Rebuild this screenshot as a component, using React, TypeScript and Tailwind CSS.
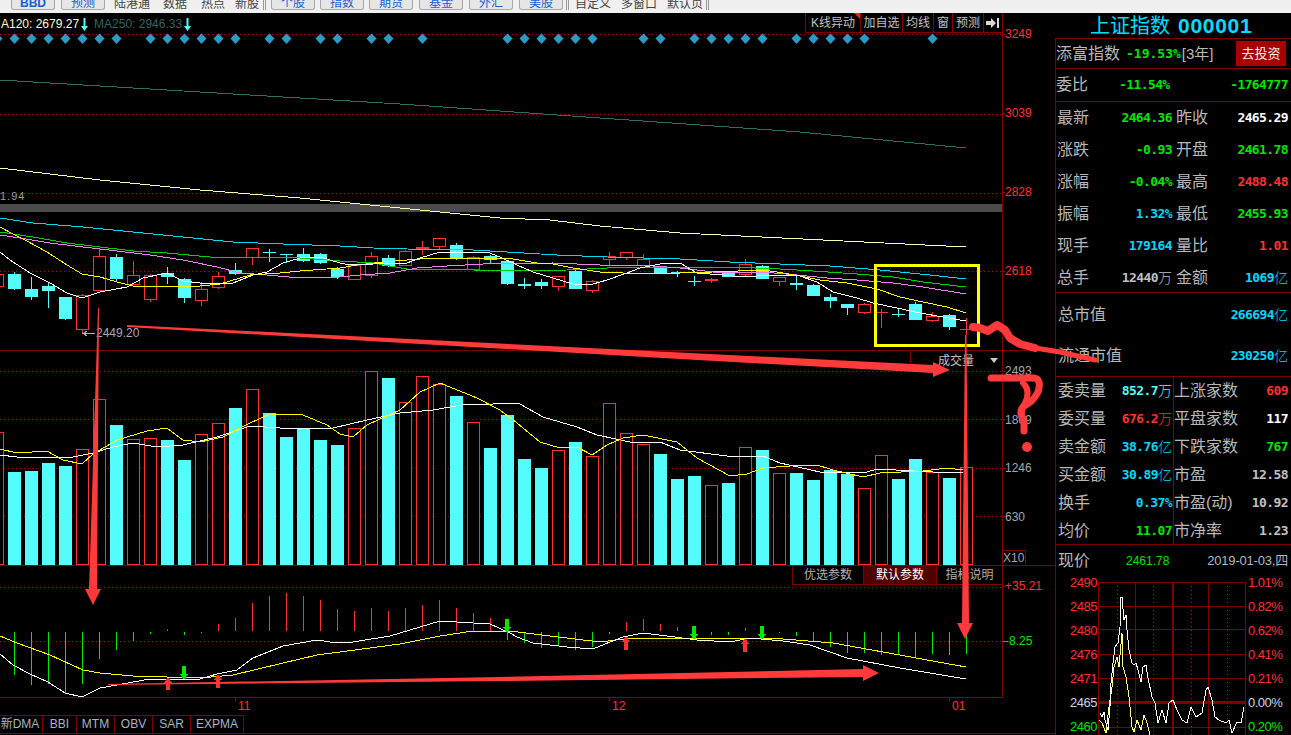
const RED = '#ff3232'
const CYAN = '#54fcfc'
const GREEN = '#00e600'

// [colour, wick top, body top, body bottom, wick bottom]
const candles: [string, number, number, number, number][] = [
  ['r', 274, 274, 286, 286], ['c', 272, 274, 289, 290], ['c', 277, 289, 297, 300], ['c', 283, 286, 291, 308],
  ['c', 297, 297, 319, 320], ['r', 294, 295, 329, 334], ['r', 249, 256, 290, 290], ['c', 254, 257, 279, 282],
  ['r', 261, 275, 284, 284], ['r', 274, 275, 299, 302], ['c', 267, 273, 277, 284], ['c', 278, 279, 298, 303],
  ['r', 282, 289, 300, 306], ['r', 272, 276, 287, 289], ['c', 263, 270, 274, 275], ['r', 248, 248, 257, 265],
  ['c', 249, 252, 253, 262], ['c', 254, 254, 255, 263], ['c', 248, 254, 261, 262], ['c', 253, 254, 263, 264],
  ['c', 267, 269, 277, 279], ['r', 264, 265, 279, 280], ['r', 252, 256, 275, 278], ['c', 255, 258, 266, 267],
  ['r', 250, 251, 265, 266], ['r', 241, 247, 249, 255], ['r', 238, 238, 246, 249], ['c', 243, 245, 259, 260],
  ['r', 256, 257, 269, 270], ['c', 255, 256, 260, 263], ['c', 261, 261, 284, 285], ['c', 278, 284, 286, 289],
  ['c', 279, 282, 286, 289], ['r', 276, 276, 286, 291], ['c', 270, 271, 289, 289], ['r', 280, 281, 290, 293],
  ['r', 252, 256, 259, 266], ['r', 252, 252, 257, 260], ['r', 254, 259, 265, 265], ['c', 266, 267, 274, 274],
  ['c', 271, 272, 273, 277], ['c', 276, 281, 282, 286], ['r', 278, 279, 281, 283], ['c', 272, 273, 277, 277],
  ['r', 259, 264, 274, 277], ['c', 265, 266, 279, 279], ['r', 277, 277, 281, 286], ['c', 276, 283, 285, 290],
  ['c', 284, 285, 296, 296], ['c', 294, 297, 301, 308], ['c', 304, 304, 308, 315], ['r', 303, 304, 312, 314],
  ['r', 309, 312, 313, 328], ['c', 308, 314, 315, 317], ['c', 302, 304, 320, 320], ['r', 312, 316, 320, 322],
  ['c', 314, 315, 327, 330], ['r', 318, 329, 330, 335],
]

const volumeTops = [
  432, 472, 471, 463, 466, 449, 399, 425, 439, 438, 440, 460, 434, 423, 408, 389, 413, 437, 429, 440, 445, 428, 371, 378, 402, 376, 384, 396, 422,
  448, 415, 459, 468, 450, 442, 456, 403, 433, 444, 454, 479, 476, 485, 483, 447, 450, 473, 473, 480, 470, 474, 488, 455, 479, 459, 472, 478, 467,
]

// zoomed y of each MACD bar end: under 198 is a red bar, over it a green one
const macdEnds = [
  0, 331, 359, 356, 383, 356, 281, 254, 228, 207, 192, 210, 204, 177, 159, 114, 94, 84, 93, 105, 132, 138, 129, 138, 129, 120, 105, 129, 144,
  159, 225, 234, 249, 243, 255, 246, 207, 171, 162, 177, 186, 220, 210, 210, 189, 220, 203, 213, 231, 246, 264, 264, 270, 271, 276, 267, 270, 267,
]

const signalIndexes = [0, 1, 2, 3, 4, 5, 6, 7, 9, 10, 11, 12, 13, 14, 16, 17, 19, 20, 22, 23, 25, 30, 31, 32, 33, 34, 35, 38, 39, 41, 42, 43, 44, 45, 47, 48, 49, 50, 51, 55]

const priceLines = [
  { color: '#2c6e66', points: '0,80 200,92 400,104 600,118 800,132 966,148' },
  { color: '#ffffb0', points: '0,168 100,180 200,190 300,198 400,208 500,218 550,220 600,226 680,233 823,240 966,247' },
  { color: '#00d8f0', points: '0,218 33,223 83,227 133,232 183,237 233,242 283,244 340,246 373,248 407,249 473,250 507,252 557,255 607,257 680,259 730,262 780,264 830,266 880,270 930,275 966,279' },
  { color: '#00d000', points: '0,232 33,237 67,243 100,247 133,251 167,253 210,257 267,257 300,258 340,261 373,263 407,269 447,269 500,271 567,270 607,268 640,267 680,267 730,267 780,269 813,271 857,274 893,277 923,282 966,287' },
  { color: '#f080f0', points: '0,235 20,238 50,243 83,247 117,251 150,255 183,260 217,267 240,273 267,275 300,278 340,277 360,275 390,273 417,268 447,266 483,264 553,263 600,265 640,265 680,268 713,272 763,272 797,275 827,278 857,280 893,283 923,287 966,294' },
  { color: '#ffff00', points: '0,227 13,234 27,241 47,252 67,265 82,274 100,277 117,282 133,286 167,286 200,286 220,284 250,275 280,273 300,271 340,268 357,265 383,262 407,260 433,258 483,258 513,259 537,263 553,264 573,268 600,272 623,273 650,273 680,273 713,272 763,270 777,272 800,276 820,280 847,283 877,289 900,297 923,302 947,307 966,313' },
  { color: '#ffffff', points: '0,252 10,260 30,273 50,283 67,293 82,298 100,292 127,287 143,278 167,273 183,281 200,283 233,283 253,275 267,272 283,263 300,258 320,257 340,263 350,265 373,264 407,263 420,258 440,252 460,252 487,252 500,257 517,265 533,272 553,278 573,284 593,284 607,280 627,273 640,268 660,264 680,263 697,273 723,275 740,277 757,276 780,275 797,275 817,282 833,292 857,298 873,303 897,308 920,313 943,317 966,321' },
]

const volumeLines = [
  { color: '#ffffff', points: '0,455 17,457 40,457 73,457 93,453 113,447 133,443 157,447 183,445 217,437 250,426 280,428 333,428 367,420 400,413 433,410 467,404 487,405 500,403 520,404 543,417 577,427 597,435 630,442 660,442 680,450 727,456 763,456 780,463 820,472 867,472 877,469 933,472 963,472' },
  { color: '#ffff00', points: '0,449 17,453 47,451 63,460 82,464 93,454 117,440 147,431 167,428 183,440 200,442 223,437 250,423 270,414 303,415 327,425 340,434 353,437 367,425 400,410 420,392 440,383 477,398 500,410 517,423 540,442 560,448 577,447 592,455 607,445 623,438 643,435 677,442 697,458 730,476 747,474 763,468 790,466 817,465 833,470 863,477 880,473 923,471 947,468 963,470' },
]

const macdLines = [
  { color: '#ffff00', points: '0,636 17,643 50,655 83,670 100,673 133,676 200,678 233,675 283,663 317,655 400,644 440,636 473,631 510,631 550,636 600,642 633,638 700,638 783,639 833,643 883,652 966,667' },
  { color: '#ffffff', points: '0,654 13,665 30,674 48,682 65,693 82,697 100,688 117,685 150,679 200,679 217,674 237,670 253,658 283,646 317,640 337,643 353,642 390,636 440,621 490,624 510,633 517,637 533,643 567,647 593,649 610,642 623,637 643,633 667,636 697,640 730,642 750,638 783,641 810,645 847,658 900,668 966,679' },
]

const sideRows = [
  { a: '最新', v: '2464.36', vc: 'text-[#00e600]', b: '昨收', w: '2465.29', wc: 'text-white' },
  { a: '涨跌', v: '-0.93', vc: 'text-[#00e600]', b: '开盘', w: '2461.78', wc: 'text-[#00e600]' },
  { a: '涨幅', v: '-0.04%', vc: 'text-[#00e600]', b: '最高', w: '2488.48', wc: 'text-[#ff3232]' },
  { a: '振幅', v: '1.32%', vc: 'text-[#00d8ff]', b: '最低', w: '2455.93', wc: 'text-[#00e600]' },
  { a: '现手', v: '179164', vc: 'text-[#00d8ff]', b: '量比', w: '1.01', wc: 'text-[#ff3232]' },
  { a: '总手', v: '12440', unit: '万', vc: 'text-[#c0c0c0]', b: '金额', w: '1069', wUnit: '亿', wc: 'text-[#00d8ff]' },
]

const tradeRows = [
  { a: '委卖量', v: '852.7', unit: '万', vc: 'text-[#54fcfc]', b: '上涨家数', w: '609', wc: 'text-[#ff3232]' },
  { a: '委买量', v: '676.2', unit: '万', vc: 'text-[#ff3232]', b: '平盘家数', w: '117', wc: 'text-white' },
  { a: '卖金额', v: '38.76', unit: '亿', vc: 'text-[#00d8ff]', b: '下跌家数', w: '767', wc: 'text-[#00e600]' },
  { a: '买金额', v: '30.89', unit: '亿', vc: 'text-[#00d8ff]', b: '市盈', w: '12.58', wc: 'text-[#c0c0c0]' },
  { a: '换手', v: '0.37%', vc: 'text-[#00d8ff]', b: '市盈(动)', w: '10.92', wc: 'text-[#c0c0c0]' },
  { a: '均价', v: '11.07', vc: 'text-[#00e600]', b: '市净率', w: '1.23', wc: 'text-[#c0c0c0]' },
]

const num = "[font-family:'DejaVu_Sans_Mono',monospace] font-bold text-[13px] tracking-[-0.6px]"
const label = 'text-[16px] text-[#b8b8b8] leading-none whitespace-nowrap'

const Dotted = ({ ys }: { ys: number[] }) => (
  <>
    {ys.map((y) => (
      <line key={y} x1="0" x2="1002" y1={y + 0.5} y2={y + 0.5} stroke="#a00000" strokeDasharray="1 3" />
    ))}
  </>
)

const Lines = ({ lines }: { lines: { color: string; points: string }[] }) => (
  <>
    {lines.map((l) => (
      <polyline key={l.color} points={l.points} fill="none" stroke={l.color} />
    ))}
  </>
)

// small buy and sell arrows on the MACD pane
const signal = (cx: number, top: number, bot: number, up: boolean) =>
  up
    ? `${cx},${top} ${cx + 4},${top + 6} ${cx + 2},${top + 6} ${cx + 2},${bot} ${cx - 2},${bot} ${cx - 2},${top + 6} ${cx - 4},${top + 6}`
    : `${cx},${bot} ${cx + 4},${bot - 6} ${cx + 2},${bot - 6} ${cx + 2},${top} ${cx - 2},${top} ${cx - 2},${bot - 6} ${cx - 4},${bot - 6}`

const Tick = ({ color = 'bg-[#a00000]' }: { color?: string }) => <div className={`w-[2px] h-px ${color} shrink-0`} />

const DownArrow = () => (
  <svg width="7" height="13" viewBox="0 0 7 13" className="ml-[2px] shrink-0">
    <path d="M2.5 0h2v8H7l-3.5 5L0 8h2.5z" fill="#54fcfc" />
  </svg>
)

const Toolbar = () => {
  const btn = 'w-[44px] h-[10px] flex items-end justify-center bg-[#e6e6e6] border-x border-b border-[#a8a8a8] rounded-b-[3px] text-[12px] leading-[12px] text-[#1560d4]'
  const plain = 'h-[10px] flex items-end text-[12px] leading-[12px] text-[#444] whitespace-nowrap'
  const sep = 'w-[3px] h-[10px] border-x border-[#999]'
  return (
    <div className="h-[13px] bg-[#f0f0f0] flex items-start pl-[11px] overflow-hidden">
      <div className={`${btn} font-bold`}>BBD</div>
      <div className={`${btn} ml-[6px]`}>预测</div>
      <div className={`${plain} ml-[9px]`}>陆港通</div>
      <div className={`${plain} ml-[13px]`}>数据</div>
      <div className={`${plain} ml-[14px]`}>热点</div>
      <div className={`${plain} ml-[10px]`}>新股</div>
      <div className={`${sep} ml-[4px]`} />
      <div className={`${btn} ml-[5px]`}>个股</div>
      <div className={`${btn} ml-[5px]`}>指数</div>
      <div className={`${btn} ml-[5px]`}>期货</div>
      <div className={`${btn} ml-[6px]`}>基金</div>
      <div className={`${btn} ml-[6px]`}>外汇</div>
      <div className={`${btn} ml-[6px]`}>美股</div>
      <div className={`${sep} ml-[3px]`} />
      <div className={`${plain} ml-[6px]`}>自定义</div>
      <div className={`${plain} ml-[10px]`}>多窗口</div>
      <div className={`${plain} ml-[10px]`}>默认页</div>
      <div className={`${sep} ml-[3px]`} />
    </div>
  )
}

const PricePane = () => (
  <div className="h-[338px] flex border-b border-[#800000]">
    <div className="w-[1003px] relative border-r border-[#800000]">
      <svg viewBox="0 13 1002 337" className="block w-[1002px] h-[337px]" shapeRendering="crispEdges">
        <Dotted ys={[34, 114, 193, 271]} />
        <rect x="0" y="204" width="1002" height="8" fill="#4a4a4a" />
        {signalIndexes.map((i) => {
          const cx = 17 * i - 2.5
          return <polygon key={i} points={`${cx},33.5 ${cx + 5},38.5 ${cx},44 ${cx - 5},38.5`} fill="#2e9ac4" shapeRendering="auto" />
        })}
        {candles.map(([kind, wt, bt, bb, wb], i) => {
          const left = 17 * i - 9
          const color = kind === 'r' ? RED : CYAN
          const thin = bb - bt <= 2
          return (
            <g key={i}>
              <line x1={left + 6.5} x2={left + 6.5} y1={wt} y2={wb} stroke={color} />
              {kind === 'c' || thin ? (
                <rect x={left} y={bt} width="13" height={Math.max(bb - bt, 1)} fill={color} />
              ) : (
                <rect x={left + 0.5} y={bt + 0.5} width="12" height={bb - bt} fill="#000" stroke={color} />
              )}
            </g>
          )
        })}
        <Lines lines={priceLines} />
        <line x1="83" x2="95" y1="333.5" y2="333.5" stroke="#b0b0b0" />
        <polyline points="87,331 83,333.5 87,336" fill="none" stroke="#b0b0b0" />
      </svg>
      <div className="absolute left-[1px] top-[3px] h-[16px] flex items-center text-[12px] whitespace-nowrap">
        <span className="text-[#ffffc8]">A120: 2679.27</span>
        <DownArrow />
        <span className="ml-[6px] text-[#33655f]">MA250: 2946.33</span>
        <DownArrow />
      </div>
      <div className="absolute left-0 top-[178px] text-[11px] leading-none tracking-[1px] text-[#a0a0a0]">1.94</div>
      <div className="absolute left-[96px] top-[313px] text-[12px] leading-[14px] text-[#a8a8b8]">2449.20</div>
      <div className="absolute right-0 top-0 h-[20px] flex border-l border-b border-[#800000] text-[12px] leading-[20px] text-[#c0c0c0] whitespace-nowrap bg-black">
        <div className="relative w-[55px] text-center border-r border-[#800000]">
          K线异动
          <div className="absolute right-0 top-0 border-t-[6px] border-l-[6px] border-t-[#ff1e1e] border-l-transparent" />
        </div>
        <div className="w-[42px] text-center border-r border-[#800000]">加自选</div>
        <div className="w-[31px] text-center border-r border-[#800000]">均线</div>
        <div className="w-[19px] text-center border-r border-[#800000]">窗</div>
        <div className="w-[31px] text-center border-r border-[#800000]">预测</div>
        <div className="w-[18px] flex items-center justify-center">
          <svg width="14" height="12" viewBox="0 0 14 12">
            <path d="M0 4h5V1l5 5-5 5V8H0z M11 1h2v10h-2z" fill="#d8d8d8" />
          </svg>
        </div>
      </div>
    </div>
    <div className="flex-1 flex flex-col pt-[13px] gap-[63px] text-[12px] leading-[16px] text-[#ff3232]">
      {['3249', '3039', '2828', '2618'].map((t) => (
        <div key={t} className="flex items-center h-[16px]">
          <Tick />
          {t}
        </div>
      ))}
    </div>
  </div>
)

const VolumePane = () => (
  <div className="h-[215px] flex border-b border-[#800000]">
    <div className="w-[1003px] relative border-r border-[#800000]">
      <svg viewBox="0 351 1002 214" className="block w-[1002px] h-[214px]" shapeRendering="crispEdges">
        <Dotted ys={[371, 419, 468, 516]} />
        {volumeTops.map((top, i) => {
          const left = 17 * i - 9
          return candles[i][0] === 'c' ? (
            <rect key={i} x={left} y={top} width="13" height={565 - top} fill={CYAN} />
          ) : (
            <rect key={i} x={left + 0.5} y={top + 0.5} width="12" height={564 - top} fill="#000" stroke={RED} />
          )
        })}
        <Lines lines={volumeLines} />
      </svg>
      <div className="absolute top-0 right-0 w-[92px] h-[12px] border-l border-[#800000] flex items-start text-[12px] leading-[20px] text-[#c0c0c0]">
        <span className="ml-[27px]">成交量</span>
        <div className="ml-[16px] mt-[7px] border-t-[5px] border-x-[4px] border-t-[#c8c8c8] border-x-transparent" />
      </div>
    </div>
    <div className="flex-1 flex flex-col pt-[12px] gap-[32.5px] text-[12px] leading-[16px] text-[#a0a8b0]">
      {['2493', '1869', '1246', '630'].map((t) => (
        <div key={t} className="flex items-center h-[16px]">
          <Tick />
          {t}
        </div>
      ))}
      <div className="-mt-[7px] w-[23px] h-[15px] border border-l-0 border-b-0 border-[#800000] text-[12px] leading-[15px]">X10</div>
    </div>
  </div>
)

const MacdPane = () => (
  <div className="h-[132px] flex">
    <div className="w-[1003px] relative border-r border-b border-[#800000]">
      <svg viewBox="0 566 1002 131" className="block w-[1002px] h-[131px]" shapeRendering="crispEdges">
        <Dotted ys={[587, 641]} />
        {macdEnds.map((end, i) => {
          if (!end) return null
          const x = 17 * i - 2.5
          return end < 198 ? (
            <line key={i} x1={x} x2={x} y1={565 + end / 3} y2="631" stroke={RED} />
          ) : (
            <line key={i} x1={x} x2={x} y1="632" y2={565 + end / 3} stroke={GREEN} />
          )
        })}
        <Lines lines={macdLines} />
        <polygon points={signal(184, 666, 680, false)} fill={GREEN} />
        <polygon points={signal(507, 619, 633, false)} fill={GREEN} />
        <polygon points={signal(694, 626, 640, false)} fill={GREEN} />
        <polygon points={signal(762, 626, 640, false)} fill={GREEN} />
        <polygon points={signal(168, 677, 690, true)} fill={RED} />
        <polygon points={signal(218, 674, 688, true)} fill={RED} />
        <polygon points={signal(626, 636, 650, true)} fill={RED} />
        <polygon points={signal(745, 638, 652, true)} fill={RED} />
      </svg>
      <div className="absolute top-0 right-0 h-[19px] flex border-l border-b border-[#800000] text-[12px] leading-[18px] text-[#b0b0b0]">
        <div className="w-[71px] text-center border-r border-[#800000]">优选参数</div>
        <div className="w-[73px] text-center border-r border-[#800000] bg-[#500000] text-white">默认参数</div>
        <div className="w-[65px] text-center">指标说明</div>
      </div>
    </div>
    <div className="flex-1 flex flex-col pt-[12px] gap-[39px] text-[12px] leading-[16px]">
      <div className="flex items-center h-[16px] text-[#ff3232]">
        <Tick />
        +35.21
      </div>
      <div className="flex items-center h-[16px] text-[#00e600]">
        <Tick color="bg-[#00e600]" />
        -8.25
      </div>
    </div>
  </div>
)

const DateAxis = () => (
  <div className="h-[17px] flex pl-[235px] text-[12px] leading-[17px] text-[#ff3232]">
    {[
      { t: '11', w: 'w-[374px]' },
      { t: '12', w: 'w-[340px]' },
      { t: '01', w: 'w-[30px]' },
    ].map((d) => (
      <div key={d.t} className={`${d.w} flex`}>
        <div className="w-px h-[3px] bg-[#a00000]" />
        <span className="ml-[2px]">{d.t}</span>
      </div>
    ))}
  </div>
)

const Tabs = () => (
  <div className="h-[19px] border-b border-[#800000] flex text-[12px] leading-[17px] text-[#a8b4c0]">
    <div className="flex border-t border-[#800000] -ml-[2px]">
      <div className="w-[45px] text-center border-r border-[#800000]">新DMA</div>
      <div className="w-[34px] text-center border-r border-[#800000]">BBI</div>
      <div className="w-[38px] text-center border-r border-[#800000]">MTM</div>
      <div className="w-[38px] text-center border-r border-[#800000]">OBV</div>
      <div className="w-[38px] text-center border-r border-[#800000]">SAR</div>
      <div className="w-[53px] text-center border-r border-[#800000]">EXPMA</div>
    </div>
  </div>
)

const Value = ({ v, unit, color }: { v: string; unit?: string; color: string }) => (
  <div className={`ml-auto flex items-center ${color} whitespace-nowrap`}>
    <span className={num}>{v}</span>
    {unit && <span className="text-[14px] leading-none font-light">{unit}</span>}
  </div>
)

const SidePanel = () => (
  <div className="flex-1 flex flex-col">
    <div className="h-[25px] flex items-center pl-[35px] text-[#00dcff] whitespace-nowrap">
      <span className="text-[20px] leading-none">上证指数</span>
      <span className="ml-[8px] text-[21px] leading-none font-bold tracking-[0.7px]">000001</span>
    </div>
    <div className="flex-1 flex flex-col border-l border-t border-[#800000] min-h-0">
      <div className="h-[30px] flex items-center border-b border-[#800000] pr-[5px]">
        <span className={label}>添富指数</span>
        <span className="ml-[6px] [font-family:'DejaVu_Sans_Mono',monospace] font-bold text-[13px] tracking-[0px] text-[#00e600]">-19.53%</span>
        <span className="ml-[1px] text-[15px] text-[#b8b8b8] leading-none whitespace-nowrap">[3年]</span>
        <div className="ml-auto w-[50px] h-[25px] flex items-center justify-center bg-[#a80000] text-[#f0f0f0] text-[13px] leading-none">去投资</div>
      </div>
      <div className="h-[33px] flex items-center border-b border-[#800000] pr-[3px]">
        <span className={`${label} w-[63px]`}>委比</span>
        <span className={`${num} text-[#00e600]`}>-11.54%</span>
        <span className={`${num} ml-auto text-[#00e600]`}>-1764777</span>
      </div>
      <div className="h-[191px] flex flex-col border-b border-[#800000] pl-[1px] pr-[3px]">
        {sideRows.map((r) => (
          <div key={r.a} className="h-[32px] shrink-0 flex items-center">
            <div className="w-[115px] flex items-center shrink-0">
              <span className={label}>{r.a}</span>
              <Value v={r.v} unit={r.unit} color={r.vc} />
            </div>
            <span className={`${label} ml-[4px]`}>{r.b}</span>
            <Value v={r.w} unit={r.wUnit} color={r.wc} />
          </div>
        ))}
      </div>
      <div className="h-[84px] flex flex-col border-b border-[#800000] pl-[2px] pr-[3px]">
        <div className="h-[41px] mt-[1px] flex items-center">
          <span className={label}>总市值</span>
          <Value v="266694" unit="亿" color="text-[#00d8ff]" />
        </div>
        <div className="h-[41px] flex items-center">
          <span className={label}>流通市值</span>
          <Value v="230250" unit="亿" color="text-[#00d8ff]" />
        </div>
      </div>
      <div className="h-[168px] grid grid-cols-[118px_1fr] border-b border-[#800000]">
        <div className="flex flex-col border-r border-[#800000] pl-[2px] pr-[1px]">
          {tradeRows.map((r) => (
            <div key={r.a} className="h-[28px] flex items-center">
              <span className={label}>{r.a}</span>
              <Value v={r.v} unit={r.unit} color={r.vc} />
            </div>
          ))}
        </div>
        <div className="flex flex-col pr-[3px]">
          {tradeRows.map((r) => (
            <div key={r.b} className="h-[28px] flex items-center">
              <span className={label}>{r.b}</span>
              <Value v={r.w} color={r.wc} />
            </div>
          ))}
        </div>
      </div>
      <div className="h-[32px] shrink-0 flex items-center pl-[2px] pr-[3px] text-[12px]">
        <span className={label}>现价</span>
        <span className="ml-[36px] text-[#00e600]">2461.78</span>
        <span className="ml-auto text-[13px] tracking-[-0.2px] text-[#b0b8c8] whitespace-nowrap">2019-01-03,四</span>
      </div>
      <div className="flex-1 flex overflow-hidden text-[13px] leading-[16px] tracking-[-0.5px]">
        <div className="w-[42px] flex flex-col items-end gap-[8px] -mt-[2px] shrink-0 pr-[1px] text-[#ff3232]">
          {['2490', '2485', '2480', '2476', '2471'].map((t) => (
            <div key={t}>{t}</div>
          ))}
          <div className="text-[#c8d4e0]">2465</div>
          <div className="text-[#00e600]">2460</div>
        </div>
        <svg viewBox="1099 582 148 153" className="block mt-[5px] w-[148px] h-[153px] shrink-0">
          <g shapeRendering="crispEdges" stroke="#800000" fill="none">
            {[582, 606, 629, 654, 678, 727].map((y) => (
              <line key={y} x1="1099" x2="1246" y1={y + 0.5} y2={y + 0.5} />
            ))}
            {[1099, 1136, 1209, 1246].map((x) => (
              <line key={x} x1={x + 0.5} x2={x + 0.5} y1="582" y2="735" />
            ))}
            {[1118, 1154, 1192, 1228].map((x) => (
              <line key={x} x1={x + 0.5} x2={x + 0.5} y1="582" y2="735" strokeDasharray="1 3" stroke="#c00000" />
            ))}
            <line x1="1174" x2="1174" y1="582" y2="735" strokeWidth="2" />
            <line x1="1099" x2="1246" y1="702" y2="702" strokeWidth="3" />
          </g>
          <g fill="none" shapeRendering="crispEdges">
            <polyline stroke="#ffff80" points="1100,720 1103,723 1107,733 1110,707 1113,687 1115,667 1118,657 1120,667 1123,633 1124,667 1127,677 1130,697 1133,727 1135,732 1138,720 1142,730 1145,715 1148,723 1151,735" />
            <polyline stroke="#ffffff" points="1101,713 1103,717 1105,712 1106,720 1109,730 1111,707 1112,683 1114,663 1116,647 1119,643 1121,627 1122,597 1123,597 1125,620 1127,615 1128,630 1130,650 1133,663 1135,665 1137,663 1139,670 1142,682 1144,667 1147,665 1149,678 1153,697 1156,703 1159,723 1163,710 1167,723 1170,703 1174,700 1178,710 1183,720 1188,723 1192,707 1197,717 1203,713 1207,690 1209,687 1213,700 1216,717 1220,720 1227,723 1230,720 1233,733 1238,722 1242,723 1245,707" />
          </g>
        </svg>
        <div className="flex flex-col gap-[8px] -mt-[2px] pl-[2px] text-[#ff3232] whitespace-nowrap">
          {['1.01%', '0.82%', '0.62%', '0.41%', '0.21%'].map((t) => (
            <div key={t}>{t}</div>
          ))}
          <div className="text-[#c8d4e0]">0.00%</div>
          <div className="text-[#00e600]">0.20%</div>
        </div>
      </div>
    </div>
  </div>
)

// the hand drawn marks lie over everything
const Annotations = () => (
  <svg viewBox="0 0 1291 735" className="absolute inset-0 w-[1291px] h-[735px] pointer-events-none">
    <g fill="#ff3a3a">
      <polygon points="127,325 680,352.5 933,365 933,362 950,370 933,377 933,373 680,359 127,327" />
      <polygon points="98,308 99,308 97,589 101,589 93,605 85,589 89,589" />
      <polygon points="965,335 966.5,335 969,623 973,623 965,639 957,623 962,623" />
      <polygon points="108,684 500,677 863,669 863,665 879,673 863,681 863,677 500,681 108,685" />
      <circle cx="1027" cy="447" r="5" />
    </g>
    <g fill="none" stroke="#ff3a3a" strokeLinecap="round" strokeLinejoin="round">
      <polyline strokeWidth="8" points="973,327 980,328 988,331 997,325 1005,330 1010,338 1020,344 1035,348" />
      <polyline strokeWidth="5" points="1035,348 1060,352 1095,360" />
      <path strokeWidth="7" d="M991 378 H1034 Q1042 379 1038 392 Q1033 402 1024 406 Q1018 412 1024 420 L1024 431" />
      <path strokeWidth="6" d="M1023 383 Q1031 390 1025 403 Q1020 410 1022 418" />
    </g>
  </svg>
)

export default function App() {
  return (
    <div className="relative w-[1291px] h-[735px] overflow-hidden bg-black [font-family:'Liberation_Sans','Noto_Sans_CJK_SC',sans-serif]">
      <Toolbar />
      <div className="flex h-[722px]">
        <div className="w-[1055px] flex flex-col shrink-0">
          <PricePane />
          <VolumePane />
          <MacdPane />
          <DateAxis />
          <Tabs />
        </div>
        <SidePanel />
      </div>
      {/* yellow marker box */}
      <div className="absolute left-[874px] top-[264px] w-[106px] h-[83px] border-[3px] border-[#ffff00]" />
      <Annotations />
    </div>
  )
}
